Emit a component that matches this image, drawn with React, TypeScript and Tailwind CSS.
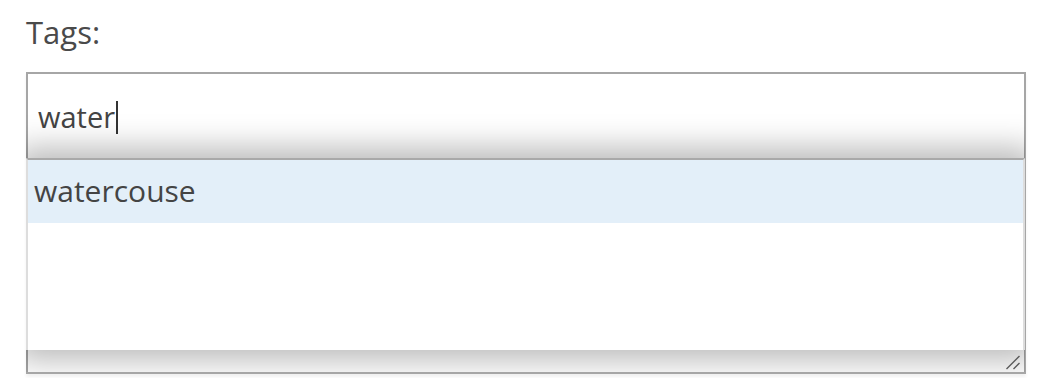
export default function App() {
  return (
    <div className="w-[1046px] h-[378px] bg-white overflow-hidden pl-[26px] pt-[12px]" style={{ fontFamily: '"Open Sans", "Lato", sans-serif' }}>
      <label className="block text-[31px] leading-[40px] text-[#4a4a4a] h-[60px]">Tags:</label>

      <div className="relative w-[1000px] h-[302px] border-2 border-[#a6a6a6] bg-white shadow-[0_3px_3px_rgba(0,0,0,0.06)]">
        {/* typed value */}
        <div className="flex items-center pl-[10px] pt-[25px] text-[29px] leading-[36px] text-[#444]">
          <span>water</span>
          <span className="ml-[1px] w-[2px] h-[33px] bg-[#333]" />
        </div>

        {/* suggestion list */}
        <div className="absolute -left-[2px] top-[84px] w-[999px] h-[192px] bg-white border-t-2 border-t-[#a9a9a9] border-x-2 border-x-[#dddddd] shadow-[0_0_30px_10px_rgba(0,0,0,0.28)] [clip-path:inset(-60px_0_-22px_0)]">
          <div className="h-[63px] bg-[#e3eff9] pl-[6px] pb-[3px] flex items-center text-[30px] text-[#444]">watercouse</div>
        </div>

        {/* resize grip */}
        <svg className="absolute right-[3px] bottom-[2px]" width="16" height="16" viewBox="0 0 16 16">
          <path d="M1.5 15 L14.5 2 M8.5 15 L14.5 9" stroke="#5a5a5a" strokeWidth="1.4" fill="none" />
        </svg>
      </div>
    </div>
  );
}
